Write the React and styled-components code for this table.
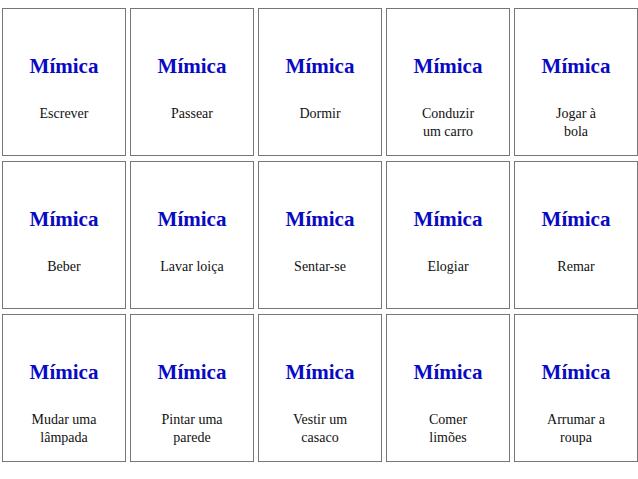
import React from "react";
import styled, { createGlobalStyle } from "styled-components";

const GlobalStyle = createGlobalStyle`
  body {
    margin: 0;
    background: #ffffff;
    font-family: "Liberation Serif", "Times New Roman", serif;
  }
`;

const cards = [
  "Escrever", "Passear", "Dormir", "Conduzir\num carro", "Jogar à\nbola",
  "Beber", "Lavar loiça", "Sentar-se", "Elogiar", "Remar",
  "Mudar uma\nlâmpada", "Pintar uma\nparede", "Vestir um\ncasaco", "Comer\nlimões", "Arrumar a\nroupa",
];

const Sheet = styled.div`
  display: grid;
  grid-template-columns: repeat(5, 124px);
  grid-auto-rows: 148px;
  column-gap: 4px;
  row-gap: 5px;
  padding: 8px 0 0 2px;
`;

const Card = styled.div`
  box-sizing: border-box;
  border: 1px solid #767676;
  display: flex;
  flex-direction: column;
  align-items: center;
  text-align: center;
`;

const Title = styled.h2`
  margin: 45px 0 0;
  font-size: 21px;
  line-height: 24px;
  font-weight: bold;
  color: #0a0ac4;
`;

const Action = styled.p`
  margin: 27px 0 0;
  font-size: 14px;
  line-height: 18px;
  color: #111;
  white-space: pre-line;
`;

export default function App() {
  return (
    <>
      <GlobalStyle />
      <Sheet>
        {cards.map((text, i) => (
          <Card key={i}>
            <Title>Mímica</Title>
            <Action>{text}</Action>
          </Card>
        ))}
      </Sheet>
    </>
  );
}
